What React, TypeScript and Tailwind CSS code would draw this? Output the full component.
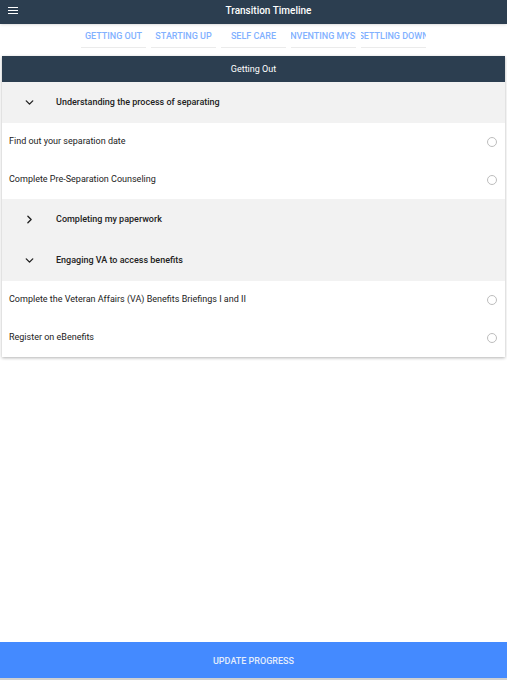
import { ChevronDown, ChevronRight } from "lucide-react";

type Item = { label: string };
type Group = { title: string; open: boolean; items: Item[] };

const tabs = ["GETTING OUT", "STARTING UP", "SELF CARE", "REINVENTING MYSELF", "SETTLING DOWN"];

const groups: Group[] = [
  {
    title: "Understanding the process of separating",
    open: true,
    items: [{ label: "Find out your separation date" }, { label: "Complete Pre-Separation Counseling" }],
  },
  { title: "Completing my paperwork", open: false, items: [] },
  {
    title: "Engaging VA to access benefits",
    open: true,
    items: [
      { label: "Complete the Veteran Affairs (VA) Benefits Briefings I and II" },
      { label: "Register on eBenefits" },
    ],
  },
];

export default function App() {
  return (
    <div className="flex h-[680px] flex-col bg-white font-['Roboto',sans-serif] text-[#222]">
      <header className="flex h-6 items-center bg-[#2c3e50] shadow-sm">
        <div className="flex w-[30px] flex-col gap-[1.5px] pl-2 pb-[3px]">
          <span className="h-[1.5px] w-[10px] bg-white" />
          <span className="h-[1.5px] w-[10px] bg-white" />
          <span className="h-[1.5px] w-[10px] bg-white" />
        </div>
        <p className="flex-1 pb-[3px] text-center text-[10px] font-medium text-white">Transition Timeline</p>
      </header>

      <nav className="flex justify-center gap-[5px] pt-[1px]">
        {tabs.map((t) => (
          <div
            key={t}
            className="flex h-[23px] w-[65px] items-center justify-center overflow-hidden whitespace-nowrap border-b border-[#ebebeb] pt-[1px] text-[9px] font-medium text-[#82b1ff]"
          >
            {t}
          </div>
        ))}
      </nav>

      <section className="mx-[2px] mt-2 bg-white shadow-[0_1px_3px_rgba(0,0,0,0.3)]">
        <div className="flex h-[26px] items-center justify-center bg-[#2c3e50] pt-[1px] text-[9px] text-white">
          Getting Out
        </div>
        {groups.map((g) => (
          <div key={g.title}>
            <div className="flex h-[41px] items-center bg-[#f2f2f2]">
              <div className="flex w-[54px] justify-center">
                {g.open ? (
                  <ChevronDown width={13} height={13} strokeWidth={2.5} className="text-[#222]" />
                ) : (
                  <ChevronRight width={13} height={13} strokeWidth={2.5} className="text-[#222]" />
                )}
              </div>
              <span className="text-[9px] font-medium">{g.title}</span>
            </div>
            {g.items.map((it) => (
              <div key={it.label} className="flex h-[38px] items-center justify-between pl-[7px] pr-[8px]">
                <span className="text-[9px]">{it.label}</span>
                <span className="h-[10px] w-[10px] rounded-full border border-[#bdbdbd]" />
              </div>
            ))}
          </div>
        ))}
      </section>

      <div className="flex-1" />

      <div className="border-b-2 border-[#d0d0d0]">
        <button className="flex h-9 w-full items-center justify-center bg-[#448aff] pt-[3px] text-[9px] font-medium text-[#e3ecfb]">
          UPDATE PROGRESS
        </button>
      </div>
    </div>
  );
}
